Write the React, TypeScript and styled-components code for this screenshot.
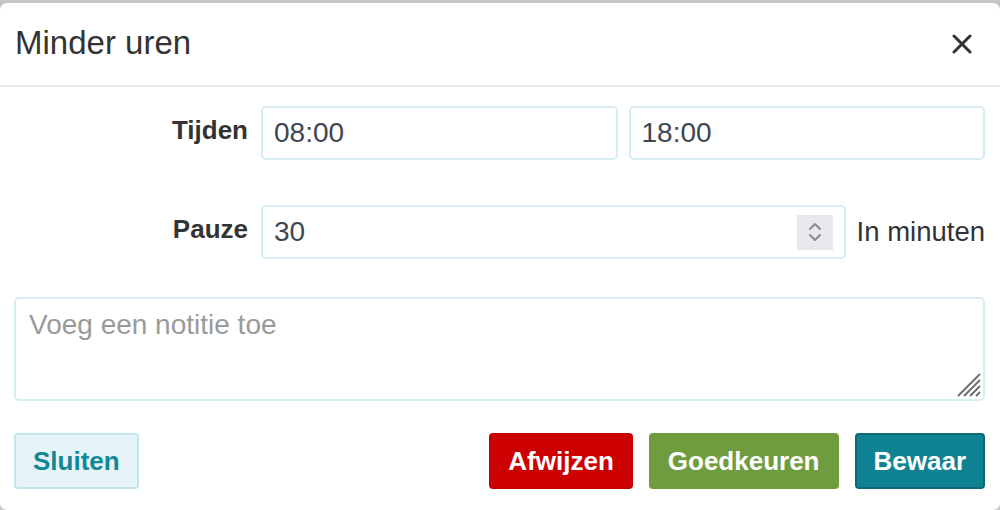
import React from "react";
import styled, { createGlobalStyle } from "styled-components";

const GlobalStyle = createGlobalStyle`
  html, body {
    margin: 0;
    padding: 0;
    background: #c6c6c6;
    font-family: "Liberation Sans", Arial, sans-serif;
  }
  * {
    box-sizing: border-box;
  }
`;

const Backdrop = styled.div`
  padding-top: 3px;
  height: 510px;
  overflow: hidden;
`;

const Modal = styled.div`
  background: #fff;
  border-radius: 7px;
  height: 507px;
`;

const Header = styled.div`
  height: 84px;
  display: flex;
  align-items: center;
  justify-content: space-between;
  padding: 0 28px 0 15px;
  border-bottom: 2px solid #e8e8e8;
`;

const Title = styled.h4`
  margin: 0 0 2px;
  font-size: 33px;
  font-weight: 400;
  color: #333;
`;

const CloseButton = styled.button`
  border: 0;
  background: transparent;
  padding: 0;
  width: 20px;
  height: 20px;
  display: flex;
  svg {
    display: block;
  }
`;

const Body = styled.div`
  padding: 19px 15px 0 14px;
`;

const FormRow = styled.div<{ $gap: number }>`
  display: flex;
  align-items: center;
  margin-bottom: ${(p) => p.$gap}px;
`;

const Label = styled.label`
  width: 234px;
  flex: none;
  text-align: right;
  font-weight: 700;
  font-size: 26px;
  color: #333;
  margin-right: 13px;
  margin-top: -6px;
`;

const Fields = styled.div`
  flex: 1;
  display: flex;
  align-items: center;
  gap: 11px;
`;

const InputBox = styled.div`
  position: relative;
  flex: 1;
  height: 54px;
  border: 2px solid #d6edf2;
  border-radius: 5px;
  display: flex;
  align-items: center;
  padding: 0 11px;
  font-size: 28px;
  color: #3e4750;
`;

const Spinner = styled.div`
  margin-left: auto;
  width: 36px;
  height: 35px;
  background: #e8e8ed;
  display: flex;
  align-items: center;
  justify-content: center;
`;

const Suffix = styled.span`
  font-size: 27.5px;
  color: #333;
  white-space: nowrap;
`;

const NoteWrap = styled.div`
  position: relative;
  margin-top: 38px;
`;

const Note = styled.textarea`
  display: block;
  width: 100%;
  height: 104px;
  border: 2px solid #d6edf2;
  border-radius: 5px;
  resize: none;
  padding: 10px 13px;
  font-family: "Liberation Sans", Arial, sans-serif;
  font-size: 28px;
  color: #3e4750;
  outline: none;
  &::placeholder {
    color: #9a9a9a;
  }
`;

const Grip = styled.svg`
  position: absolute;
  right: 4px;
  bottom: 4px;
`;

const Footer = styled.div`
  display: flex;
  align-items: center;
  gap: 16px;
  margin-top: 32px;
`;

const variants = {
  light: { bg: "#e6f4f8", border: "#c2e4ec", color: "#13879a" },
  danger: { bg: "#cc0000", border: "#c40000", color: "#fff" },
  success: { bg: "#6e9c3e", border: "#6e9c3e", color: "#fff" },
  primary: { bg: "#0f8394", border: "#0a6a78", color: "#fff" },
};

const Button = styled.button<{ $variant: keyof typeof variants }>`
  height: 56px;
  padding: 0 17px;
  border-radius: 4px;
  border: 2px solid ${(p) => variants[p.$variant].border};
  background: ${(p) => variants[p.$variant].bg};
  color: ${(p) => variants[p.$variant].color};
  font-family: "Liberation Sans", Arial, sans-serif;
  font-size: 26px;
  font-weight: 700;
`;

const Spacer = styled.div`
  flex: 1;
`;

function CloseIcon() {
  return (
    <svg width="20" height="20" viewBox="0 0 20 20">
      <path d="M2 2 L18 18 M18 2 L2 18" stroke="#333" strokeWidth="3" strokeLinecap="round" />
    </svg>
  );
}

function SpinIcon() {
  return (
    <svg width="16" height="24" viewBox="0 0 16 24">
      <path d="M3 9 L8 4 L13 9 M3 15 L8 20 L13 15" stroke="#8a8a90" strokeWidth="2" fill="none" strokeLinecap="round" strokeLinejoin="round" />
    </svg>
  );
}

export default function App() {
  return (
    <>
      <GlobalStyle />
      <Backdrop>
        <Modal>
          <Header>
            <Title>Minder uren</Title>
            <CloseButton aria-label="Sluiten">
              <CloseIcon />
            </CloseButton>
          </Header>
          <Body>
            <FormRow $gap={45}>
              <Label>Tijden</Label>
              <Fields>
                <InputBox>08:00</InputBox>
                <InputBox>18:00</InputBox>
              </Fields>
            </FormRow>
            <FormRow $gap={0}>
              <Label>Pauze</Label>
              <Fields>
                <InputBox>
                  30
                  <Spinner>
                    <SpinIcon />
                  </Spinner>
                </InputBox>
                <Suffix>In minuten</Suffix>
              </Fields>
            </FormRow>
            <NoteWrap>
              <Note placeholder="Voeg een notitie toe" />
              <Grip width="24" height="24" viewBox="0 0 24 24">
                <path d="M23 1 L1 23 M23 7 L7 23 M23 13 L13 23 M23 19 L19 23" stroke="#6a6a6a" strokeWidth="1.8" />
              </Grip>
            </NoteWrap>
            <Footer>
              <Button $variant="light">Sluiten</Button>
              <Spacer />
              <Button $variant="danger">Afwijzen</Button>
              <Button $variant="success">Goedkeuren</Button>
              <Button $variant="primary">Bewaar</Button>
            </Footer>
          </Body>
        </Modal>
      </Backdrop>
    </>
  );
}
